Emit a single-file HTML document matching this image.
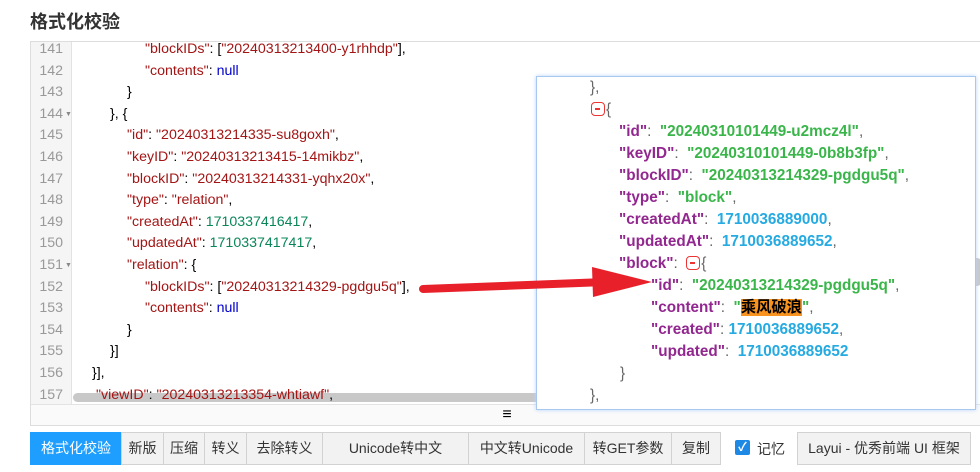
<!DOCTYPE html>
<html><head><meta charset="utf-8"><style>
*{margin:0;padding:0;box-sizing:border-box}
body{width:980px;height:472px;background:#fff;font-family:"Liberation Sans","Noto Sans CJK SC",sans-serif;position:relative;overflow:hidden}
h1{position:absolute;left:30px;top:8px;font-size:18px;font-weight:bold;color:#333}
.ed{position:absolute;left:30px;top:41px;width:952px;height:385px;border:1px solid #ddd;overflow:hidden}
.gut{position:absolute;left:0;top:0;width:41px;height:362px;background:#f5f5f5;border-right:1px solid #e3e3e3}
.ln{position:absolute;height:21.6px;line-height:21.6px;font-size:14.2px;white-space:pre}
.num{left:0;width:32px;text-align:right;color:#999}
.fold{position:absolute;left:34px;font-size:7px;color:#888}
.code{color:#000}
.s{color:#a31515}.n{color:#098658}.nl{color:#0000cd}
.hs{position:absolute;left:42px;top:351px;width:800px;height:9px;background:#c8c8c8;border-radius:5px}
.bar{position:absolute;left:0;top:362px;width:952px;height:22px;border-top:1px solid #e3e3e3;background:#fafafa;text-align:center;font-size:16px;line-height:20px;font-weight:bold}
.vs{position:absolute;right:0;top:216px;width:10px;height:28px;background:#c8c8c8;border-radius:4px}
.pop{position:absolute;left:536px;top:76px;width:440px;height:334px;background:#fff;border:1px solid #a8c8f0;box-shadow:0 0 4px #b8d4f8}
.pl{position:absolute;font-size:15.3px;font-weight:bold;white-space:pre;line-height:22px;color:#555}
.k{color:#92278f}.g{color:#3ab54a}.b{color:#25aae1}.p{color:#666;font-weight:normal}
.mi{display:inline-block;width:14px;height:14px;border:1.5px solid #e33;border-radius:4px;vertical-align:-2px;position:relative;margin-right:1px}
.mi:after{content:"";position:absolute;left:3px;top:5px;width:5px;height:1.5px;background:#e33}
.hl{background:#f7931e;color:#000}
.btns{position:absolute;left:30px;top:432px;height:33px;display:flex}
.btn{height:33px;border:1px solid #d2d2d2;margin-left:-1px;background:#f2f2f2;font-size:14px;line-height:31px;text-align:center;color:#333;white-space:nowrap}
.btn.a{background:#1e9fff;color:#fff;border-color:#1e9fff}
.cb{position:absolute;left:735px;top:440px;width:15px;height:15px;background:#1e88e5;border-radius:2px;color:#fff;font-size:12px;line-height:15px;text-align:center;font-weight:bold}
</style></head><body>
<h1>格式化校验</h1>
<div class="ed">
<div class="gut"></div>
<div class="ln num" style="top:-3px">141</div><div class="ln code" style="left:114px;top:-3px"><span class="s">"blockIDs"</span>: [<span class="s">"20240313213400-y1rhhdp"</span>],</div>
<div class="ln num" style="top:18.6px">142</div><div class="ln code" style="left:114px;top:18.6px"><span class="s">"contents"</span>: <span class="nl">null</span></div>
<div class="ln num" style="top:40.2px">143</div><div class="ln code" style="left:96px;top:40.2px">}</div>
<div class="ln num" style="top:61.8px">144</div><span class="fold" style="top:69px">▼</span><div class="ln code" style="left:79px;top:61.8px">}, {</div>
<div class="ln num" style="top:83.4px">145</div><div class="ln code" style="left:96px;top:83.4px"><span class="s">"id"</span>: <span class="s">"20240313214335-su8goxh"</span>,</div>
<div class="ln num" style="top:105px">146</div><div class="ln code" style="left:96px;top:105px"><span class="s">"keyID"</span>: <span class="s">"20240313213415-14mikbz"</span>,</div>
<div class="ln num" style="top:126.6px">147</div><div class="ln code" style="left:96px;top:126.6px"><span class="s">"blockID"</span>: <span class="s">"20240313214331-yqhx20x"</span>,</div>
<div class="ln num" style="top:148.2px">148</div><div class="ln code" style="left:96px;top:148.2px"><span class="s">"type"</span>: <span class="s">"relation"</span>,</div>
<div class="ln num" style="top:169.8px">149</div><div class="ln code" style="left:96px;top:169.8px"><span class="s">"createdAt"</span>: <span class="n">1710337416417</span>,</div>
<div class="ln num" style="top:191.4px">150</div><div class="ln code" style="left:96px;top:191.4px"><span class="s">"updatedAt"</span>: <span class="n">1710337417417</span>,</div>
<div class="ln num" style="top:213px">151</div><span class="fold" style="top:220px">▼</span><div class="ln code" style="left:96px;top:213px"><span class="s">"relation"</span>: {</div>
<div class="ln num" style="top:234.6px">152</div><div class="ln code" style="left:114px;top:234.6px"><span class="s">"blockIDs"</span>: [<span class="s">"20240313214329-pgdgu5q"</span>],</div>
<div class="ln num" style="top:256.2px">153</div><div class="ln code" style="left:114px;top:256.2px"><span class="s">"contents"</span>: <span class="nl">null</span></div>
<div class="ln num" style="top:277.8px">154</div><div class="ln code" style="left:96px;top:277.8px">}</div>
<div class="ln num" style="top:299.4px">155</div><div class="ln code" style="left:79px;top:299.4px">}]</div>
<div class="ln num" style="top:321px">156</div><div class="ln code" style="left:61px;top:321px">}],</div>
<div class="ln num" style="top:342.6px">157</div>
<div class="hs"></div>
<div class="ln code" style="left:65px;top:342.6px"><span class="s">"viewID"</span>: <span class="s">"20240313213354-whtiawf"</span>,</div>
<div class="vs"></div>
<div class="bar">≡</div>
</div>
<div class="pop">
<div class="pl p" style="left:53px;top:0px">},</div>
<div class="pl" style="left:54px;top:22px"><span class="mi"></span><span class="p">{</span></div>
<div class="pl" style="left:82px;top:44px"><span class="k">"id"</span><span class="p">: </span> <span class="g">"20240310101449-u2mcz4l"</span><span class="p">,</span></div>
<div class="pl" style="left:82px;top:66px"><span class="k">"keyID"</span><span class="p">: </span> <span class="g">"20240310101449-0b8b3fp"</span><span class="p">,</span></div>
<div class="pl" style="left:82px;top:88px"><span class="k">"blockID"</span><span class="p">: </span> <span class="g">"20240313214329-pgdgu5q"</span><span class="p">,</span></div>
<div class="pl" style="left:82px;top:110px"><span class="k">"type"</span><span class="p">: </span> <span class="g">"block"</span><span class="p">,</span></div>
<div class="pl" style="left:82px;top:132px"><span class="k">"createdAt"</span><span class="p">: </span> <span class="b">1710036889000</span><span class="p">,</span></div>
<div class="pl" style="left:82px;top:154px"><span class="k">"updatedAt"</span><span class="p">: </span> <span class="b">1710036889652</span><span class="p">,</span></div>
<div class="pl" style="left:82px;top:176px"><span class="k">"block"</span><span class="p">: </span> <span class="mi"></span><span class="p">{</span></div>
<div class="pl" style="left:114px;top:198px"><span class="k">"id"</span><span class="p">: </span> <span class="g">"20240313214329-pgdgu5q"</span><span class="p">,</span></div>
<div class="pl" style="left:114px;top:220px"><span class="k">"content"</span><span class="p">: </span> <span class="g">"<span class="hl">乘风破浪</span>"</span><span class="p">,</span></div>
<div class="pl" style="left:114px;top:242px"><span class="k">"created"</span><span class="p">: </span><span class="b">1710036889652</span><span class="p">,</span></div>
<div class="pl" style="left:114px;top:264px"><span class="k">"updated"</span><span class="p">: </span> <span class="b">1710036889652</span></div>
<div class="pl p" style="left:83px;top:286px">}</div>
<div class="pl p" style="left:53px;top:308px">},</div>
</div>
<svg style="position:absolute;left:0;top:0" width="980" height="472">
<path d="M423 289 L605 282" stroke="#e8202a" stroke-width="8" stroke-linecap="round"/>
<polygon points="592,267 652,282 593,297" fill="#e8202a"/>
</svg>
<div class="btns">
<div class="btn a" style="width:92px;margin-left:0">格式化校验</div>
<div class="btn" style="width:43px">新版</div>
<div class="btn" style="width:42px">压缩</div>
<div class="btn" style="width:43px">转义</div>
<div class="btn" style="width:77px">去除转义</div>
<div class="btn" style="width:147px">Unicode转中文</div>
<div class="btn" style="width:117px">中文转Unicode</div>
<div class="btn" style="width:88px">转GET参数</div>
<div class="btn" style="width:50px">复制</div>
</div>
<div class="cb">✓</div>
<div style="position:absolute;left:757px;top:439px;font-size:14px;color:#333">记忆</div>
<div class="btn" style="position:absolute;left:798px;top:432px;width:174px">Layui - 优秀前端 UI 框架</div>
</body></html>
